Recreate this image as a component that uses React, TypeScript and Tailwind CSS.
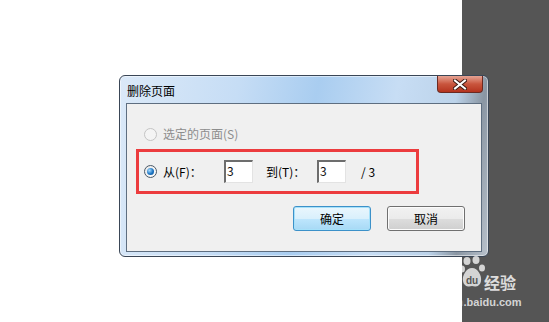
const cjk = { fontFamily: '"Microsoft YaHei", "Noto Sans CJK SC", "Noto Sans", sans-serif' }

function Radio({ checked, disabled }: { checked?: boolean; disabled?: boolean }) {
  return (
    <span
      className={`flex items-center justify-center w-[13px] h-[13px] rounded-full border ${
        disabled ? 'border-[#c4c4c4] bg-[#f4f4f4]' : 'border-[#4a5866] bg-gradient-to-br from-[#e9e9e9] to-[#fdfdfd]'
      }`}
    >
      {checked && (
        <span className="w-[7px] h-[7px] rounded-full bg-[radial-gradient(circle_at_35%_35%,#a8dcff,#1c74c2_55%,#0b4f8f)]" />
      )}
    </span>
  )
}

function NumInput({ value }: { value: string }) {
  return (
    <div className="w-[29px] h-[23px] bg-white border-t-2 border-l-2 border-[#6d6d6d] border-r border-b border-r-[#e3e3e3] border-b-[#e3e3e3] text-[12px] leading-[18px] pl-[1px] text-[#111]" style={cjk}>
      {value}
    </div>
  )
}

function CloseButton() {
  return (
    <div className="w-[46px] h-[17px] rounded-b-[4px] border border-[#6b2a22] border-t-0 bg-gradient-to-b from-[#e5a394] via-[#c9553d] to-[#b4331e] flex items-center justify-center">
      <svg width="14" height="11" viewBox="0 0 14 11">
        <path d="M2 1.5 L12 9.5 M12 1.5 L2 9.5" stroke="#3b1a14" strokeWidth="4" strokeLinecap="square" />
        <path d="M2 1.5 L12 9.5 M12 1.5 L2 9.5" stroke="#fff" strokeWidth="2" strokeLinecap="square" />
      </svg>
    </div>
  )
}

function Watermark() {
  return (
    <div className="absolute left-[425px] top-[256px] w-[100px] h-[56px] text-white/80 pointer-events-none">
      <svg className="absolute left-[34px] top-[0px]" width="28" height="34" viewBox="0 0 28 34">
        <g fill="rgba(255,255,255,0.75)">
          <ellipse cx="8" cy="5" rx="3.5" ry="4" />
          <ellipse cx="17" cy="4" rx="3.5" ry="4" />
          <ellipse cx="3" cy="13" rx="3" ry="3.5" />
          <ellipse cx="23" cy="12" rx="3" ry="3.5" />
          <path d="M13 12 C7 12 3 20 4 25 C5 31 10 31 13 30 C16 31 21 31 22 25 C23 20 19 12 13 12 Z" />
        </g>
        <text x="13" y="28" textAnchor="middle" fontSize="10" fontWeight="bold" fill="#555" fontFamily="Liberation Sans, sans-serif">du</text>
      </svg>
      <div className="absolute left-[0px] top-[18px] text-[17px] font-bold text-white/25 leading-none" style={{ fontFamily: '"Liberation Sans", sans-serif' }}>
        Bai
      </div>
      <div className="absolute left-[59px] top-[18px] text-[16px] font-bold text-white/80 leading-none" style={cjk}>
        经验
      </div>
      <div className="absolute left-[0px] top-[41px] text-[11px] font-bold leading-none" style={{ fontFamily: '"Liberation Sans", sans-serif' }}>
        <span className="text-white/25">jingyan</span>
        <span className="text-white/75">.baidu.com</span>
      </div>
    </div>
  )
}

export default function App() {
  return (
    <div className="relative w-[549px] h-[322px] overflow-hidden flex">
      <div className="flex-1 bg-white" />
      <div className="w-[87px] bg-[#555555]" />

      {/* dialog window */}
      <div className="absolute left-[119px] top-[75px] w-[370px] h-[182px] rounded-[6px] border border-[#3a4656] bg-[linear-gradient(100deg,#dbe9f8_0%,#c6ddf5_30%,#a9cdf0_50%,#c7ddf4_70%,#bcd3ea_85%,#8a96a3_92%,#b9c2cc_100%)] shadow-[0_0_0_1px_rgba(255,255,255,0.5)_inset] flex flex-col">
        <div className="h-[27px] flex items-start justify-between pl-[7px] pr-[5px]">
          <span className="text-[12px] text-black leading-none mt-[9px]" style={cjk}>删除页面</span>
          <CloseButton />
        </div>
        <div className="mx-[6px] h-[149px] border border-[#5e6e80] bg-[#f0f0f0] flex flex-col text-[12px]" style={cjk}>
          <div className="h-[30px] mt-[15px] flex items-center gap-[6px] pl-[17px] text-[#8d8d8d]">
            <Radio disabled />
            <span>选定的页面(S)</span>
          </div>
          <div className="ml-[9px] w-[283px] h-[45px] border-[3px] border-[#ec3c3e] flex items-center pl-[5px] text-black">
            <Radio checked />
            <span className="ml-[6px] w-[61px]">从(F)：</span>
            <NumInput value="3" />
            <span className="ml-[13px] w-[51px]">到(T)：</span>
            <NumInput value="3" />
            <span className="ml-[15px]">/ 3</span>
          </div>
          <div className="mt-[12px] flex gap-[16px] pl-[166px]">
            <button className="w-[78px] h-[25px] rounded-[3px] border border-[#3c91c9] shadow-[inset_0_0_0_1px_#a6e1fa] bg-[linear-gradient(#eaf6fd_0%,#d9f0fc_50%,#bee6fd_51%,#a7d9f5_100%)] text-[12px] text-black">
              确定
            </button>
            <button className="w-[78px] h-[25px] rounded-[3px] border border-[#707070] shadow-[inset_0_0_0_1px_#fcfcfc] bg-[linear-gradient(#f2f2f2_0%,#ebebeb_50%,#dddddd_51%,#cfcfcf_100%)] text-[12px] text-black">
              取消
            </button>
          </div>
        </div>
      </div>

      <Watermark />
    </div>
  )
}
